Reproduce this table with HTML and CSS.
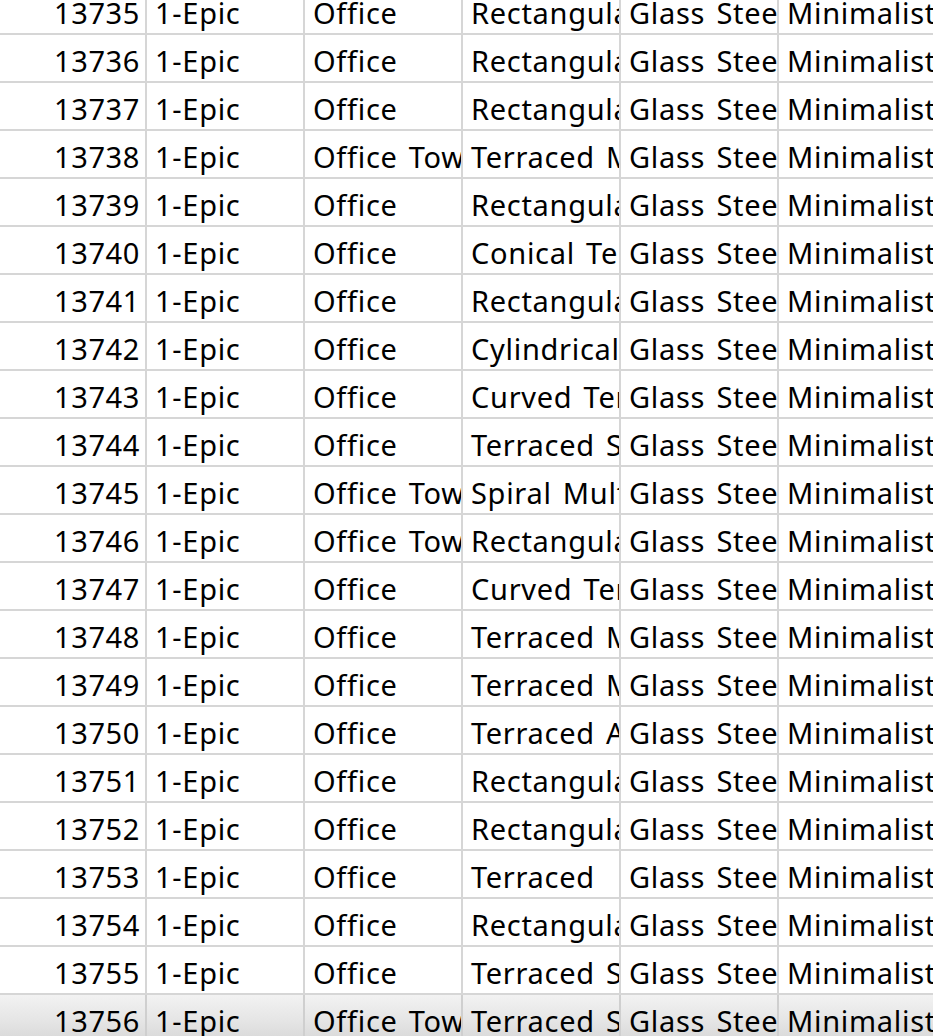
FILE: index.html
```html
<!DOCTYPE html>
<html>
<head>
<meta charset="utf-8">
<link rel="stylesheet" href="styles.css">
</head>
<body>
<div class="sheet">
  <div class="row"><div class="c num">13735</div><div class="c">1-Epic</div><div class="c">Office</div><div class="c">Rectangular Tower</div><div class="c">Glass Steel</div><div class="c">Minimalist Modern</div></div>
  <div class="row"><div class="c num">13736</div><div class="c">1-Epic</div><div class="c">Office</div><div class="c">Rectangular Tower</div><div class="c">Glass Steel</div><div class="c">Minimalist Modern</div></div>
  <div class="row"><div class="c num">13737</div><div class="c">1-Epic</div><div class="c">Office</div><div class="c">Rectangular Tower</div><div class="c">Glass Steel</div><div class="c">Minimalist Modern</div></div>
  <div class="row"><div class="c num">13738</div><div class="c">1-Epic</div><div class="c">Office Tower</div><div class="c">Terraced Mid-rise</div><div class="c">Glass Steel</div><div class="c">Minimalist Modern</div></div>
  <div class="row"><div class="c num">13739</div><div class="c">1-Epic</div><div class="c">Office</div><div class="c">Rectangular Tower</div><div class="c">Glass Steel</div><div class="c">Minimalist Modern</div></div>
  <div class="row"><div class="c num">13740</div><div class="c">1-Epic</div><div class="c">Office</div><div class="c">Conical Terraced</div><div class="c">Glass Steel</div><div class="c">Minimalist Modern</div></div>
  <div class="row"><div class="c num">13741</div><div class="c">1-Epic</div><div class="c">Office</div><div class="c">Rectangular Tower</div><div class="c">Glass Steel</div><div class="c">Minimalist Modern</div></div>
  <div class="row"><div class="c num">13742</div><div class="c">1-Epic</div><div class="c">Office</div><div class="c">Cylindrical</div><div class="c">Glass Steel</div><div class="c">Minimalist Modern</div></div>
  <div class="row"><div class="c num">13743</div><div class="c">1-Epic</div><div class="c">Office</div><div class="c">Curved Terraced</div><div class="c">Glass Steel</div><div class="c">Minimalist Modern</div></div>
  <div class="row"><div class="c num">13744</div><div class="c">1-Epic</div><div class="c">Office</div><div class="c">Terraced Skyscraper</div><div class="c">Glass Steel</div><div class="c">Minimalist Modern</div></div>
  <div class="row"><div class="c num">13745</div><div class="c">1-Epic</div><div class="c">Office Tower</div><div class="c">Spiral Multi-level</div><div class="c">Glass Steel</div><div class="c">Minimalist Modern</div></div>
  <div class="row"><div class="c num">13746</div><div class="c">1-Epic</div><div class="c">Office Tower</div><div class="c">Rectangular Tower</div><div class="c">Glass Steel</div><div class="c">Minimalist Modern</div></div>
  <div class="row"><div class="c num">13747</div><div class="c">1-Epic</div><div class="c">Office</div><div class="c">Curved Terraced</div><div class="c">Glass Steel</div><div class="c">Minimalist Modern</div></div>
  <div class="row"><div class="c num">13748</div><div class="c">1-Epic</div><div class="c">Office</div><div class="c">Terraced Mid-rise</div><div class="c">Glass Steel</div><div class="c">Minimalist Modern</div></div>
  <div class="row"><div class="c num">13749</div><div class="c">1-Epic</div><div class="c">Office</div><div class="c">Terraced Mid-rise</div><div class="c">Glass Steel</div><div class="c">Minimalist Modern</div></div>
  <div class="row"><div class="c num">13750</div><div class="c">1-Epic</div><div class="c">Office</div><div class="c">Terraced Atrium</div><div class="c">Glass Steel</div><div class="c">Minimalist Modern</div></div>
  <div class="row"><div class="c num">13751</div><div class="c">1-Epic</div><div class="c">Office</div><div class="c">Rectangular Tower</div><div class="c">Glass Steel</div><div class="c">Minimalist Modern</div></div>
  <div class="row"><div class="c num">13752</div><div class="c">1-Epic</div><div class="c">Office</div><div class="c">Rectangular Tower</div><div class="c">Glass Steel</div><div class="c">Minimalist Modern</div></div>
  <div class="row"><div class="c num">13753</div><div class="c">1-Epic</div><div class="c">Office</div><div class="c">Terraced</div><div class="c">Glass Steel</div><div class="c">Minimalist Modern</div></div>
  <div class="row"><div class="c num">13754</div><div class="c">1-Epic</div><div class="c">Office</div><div class="c">Rectangular Tower</div><div class="c">Glass Steel</div><div class="c">Minimalist Modern</div></div>
  <div class="row"><div class="c num">13755</div><div class="c">1-Epic</div><div class="c">Office</div><div class="c">Terraced Skyscraper</div><div class="c">Glass Steel</div><div class="c">Minimalist Modern</div></div>
  <div class="row last"><div class="c num">13756</div><div class="c">1-Epic</div><div class="c">Office Tower</div><div class="c">Terraced Skyscraper</div><div class="c">Glass Steel</div><div class="c">Minimalist Modern</div></div>
</div>
</body>
</html>
```

FILE: styles.css
```css
html, body {
  margin: 0;
  padding: 0;
  background: #ffffff;
  overflow: hidden;
}
body {
  width: 933px;
  height: 1036px;
  font-family: "Noto Sans", "Open Sans", sans-serif;
  font-size: 29px;
  color: #000000;
}
.sheet {
  margin-top: -13px;
  width: 1000px;
}
.row {
  display: grid;
  grid-template-columns: 147px 158px 158px 158px 158px 200px;
  height: 48px;
  border-bottom: 2px solid #d6d6d6;
  box-sizing: border-box;
}
.c {
  border-right: 2px solid #d6d6d6;
  padding: 3px 6px 0 8px;
  white-space: nowrap;
  overflow: hidden;
  line-height: 46px;
  height: 46px;
  box-sizing: border-box;
  letter-spacing: 0.7px;
  word-spacing: 3px;
}
.num {
  text-align: right;
  padding-right: 5px;
  letter-spacing: 0.6px;
}
.row.last {
  background: linear-gradient(to bottom, #f2f2f2 0%, #e4e4e4 60%, #d8d8d8 100%);
}
.row.last .c {
  border-right-color: #cfcfcf;
}
```
